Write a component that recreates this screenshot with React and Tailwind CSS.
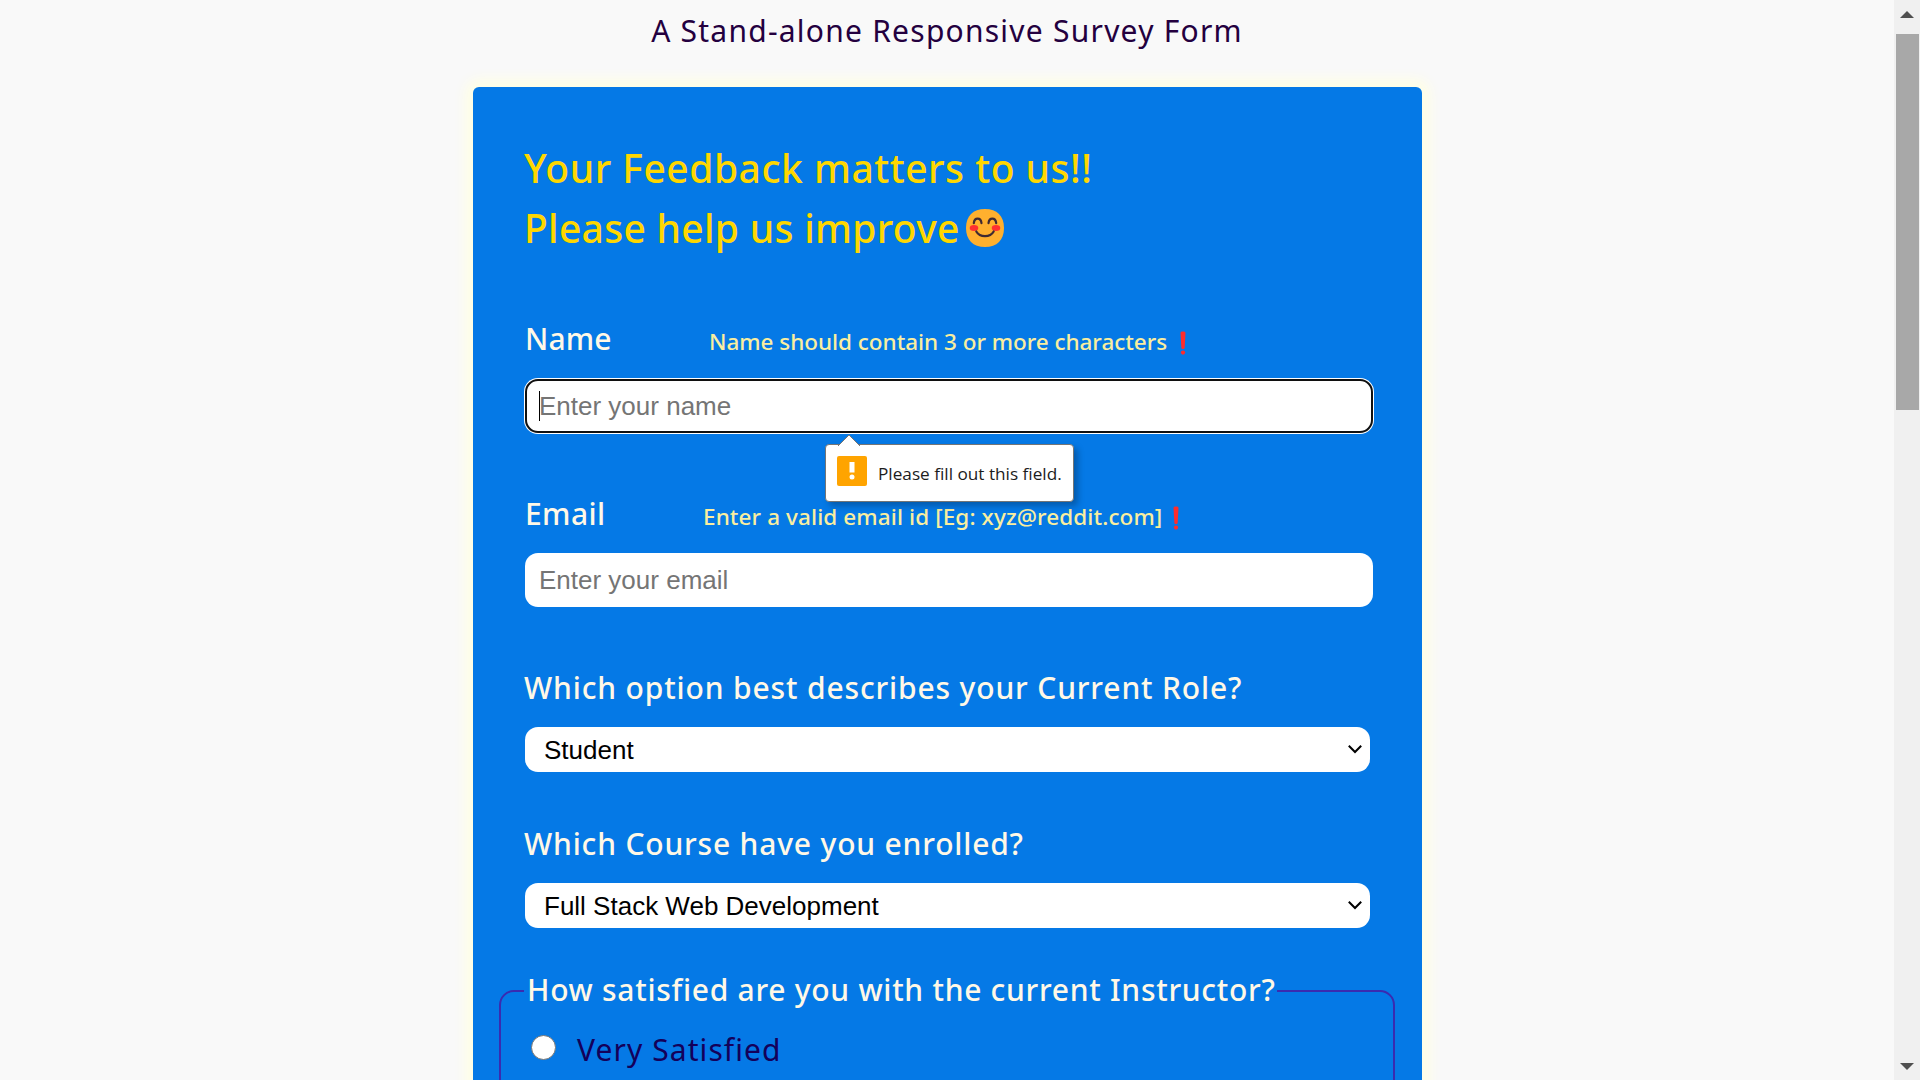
import React from 'react';

const labelClass = 'whitespace-nowrap font-medium text-[30px] leading-[40px] text-[#fff8e7]';
const hintClass = 'whitespace-nowrap font-medium text-[22.5px] leading-[40px] text-[#f9eea0]';
const inputClass =
  "block h-[54px] w-[848px] rounded-[13px] bg-white px-[14px] font-['Liberation_Sans',Arial,sans-serif] text-[26px] text-black outline-none placeholder:text-[#757575] placeholder:opacity-100";

function SmilingFace() {
  return (
    <svg className="ml-[5px] h-[40px] w-[40px]" viewBox="0 0 40 40" role="img" aria-label="smiling face">
      <path d="M20 1C32 1 39 8 39 20s-7 19-19 19S1 32 1 20 8 1 20 1Z" fill="#ffb02e" />
      <ellipse cx="9" cy="20" rx="4.3" ry="3" fill="#ff3030" />
      <ellipse cx="31" cy="20" rx="4.3" ry="3" fill="#ff3030" />
      <path d="M8.800 15.200c.7-6 7-6 7.700 0M23.500 15.200c.7-6 7-6 7.700 0" fill="none" stroke="#402a32" strokeWidth="2.200" strokeLinecap="round" />
      <path d="M11.300 23.500c3.500 6.200 13.900 6.200 17.400 0" fill="none" stroke="#402a32" strokeWidth="2.200" strokeLinecap="round" />
    </svg>
  );
}

function RedMark({ className }) {
  return (
    <svg className={className} viewBox="0 0 6 27" role="img" aria-label="exclamation">
      <path d="M.2 2.200C.2.200 5.800.200 5.800 2.200L4.900 18.500C4.800 20.800 1.200 20.800 1.100 18.500Z" fill="#ff2c2c" />
      <circle cx="3" cy="24.300" r="2.400" fill="#ff2c2c" />
    </svg>
  );
}

function SelectBox({ value }) {
  return (
    <div className="relative mt-[19px] w-[845px]">
      <select
        className="block h-[45px] w-full appearance-none rounded-[13px] bg-white pl-[19px] pt-px font-['Liberation_Sans',Arial,sans-serif] text-[26px] text-black outline-none"
        defaultValue={value}
      >
        <option>{value}</option>
      </select>
      <svg className="absolute right-[7px] top-[17px] h-[10px] w-[16px]" viewBox="0 0 16 10" fill="none" stroke="#000" strokeWidth="2">
        <path d="M1.800 1.800 8 8l6.200-6.200" />
      </svg>
    </div>
  );
}

function ValidationBubble() {
  return (
    <div className="absolute left-[300px] top-[65px] z-10 flex h-[58px] w-[249px] items-center rounded-[4px] border border-[#757575] bg-white pl-[11px] shadow-[4px_4px_6px_rgba(0,0,0,0.25)]">
      <svg className="absolute left-[12px] top-[-11px] h-[12px] w-[22px]" viewBox="0 0 22 12">
        <path d="M0 12 11 1l11 11" fill="#fff" stroke="#757575" />
        <path d="M1 11.300h20V12H1Z" fill="#fff" />
      </svg>
      <svg className="mb-[4px] h-[30px] w-[30px]" viewBox="0 0 30 30">
        <rect width="30" height="30" rx="2" fill="#ffa400" />
        <rect x="12.500" y="6" width="5" height="10.500" fill="#fff" />
        <circle cx="15" cy="21" r="2.500" fill="#fff" />
      </svg>
      <span className="ml-[11px] mt-[2px] whitespace-nowrap font-['Open_Sans','Noto_Sans',sans-serif] text-[17.200px] leading-6 text-[#1c1c1c]">
        Please fill out this field.
      </span>
    </div>
  );
}

function Scrollbar() {
  return (
    <div className="flex h-full w-[26px] flex-col items-center bg-[#f0f0f0]">
      <svg className="mt-[11px] h-[7px] w-[14px]" viewBox="0 0 14 7">
        <path d="M7 0 14 7H0Z" fill="#505050" />
      </svg>
      <div className="ml-px mt-4 h-[376px] w-[23px] bg-[#a8a8a8]" />
      <svg className="mb-[10px] mt-auto h-[7px] w-[14px]" viewBox="0 0 14 7">
        <path d="M7 7 0 0h14Z" fill="#505050" />
      </svg>
    </div>
  );
}

export default function App() {
  return (
    <div className="flex h-screen w-full overflow-hidden bg-[#f9f9f9] font-['Noto_Sans','Open_Sans',sans-serif]">
      <main className="h-full flex-1 overflow-hidden pt-[11px]">
        <p className="text-center text-[30px] leading-[40px] tracking-[1.240px] text-[#24003f]">
          A Stand-alone Responsive Survey Form
        </p>
        <form className="ml-[473px] mt-[36px] h-[1200px] w-[949px] rounded-[6px] bg-[#0579e6] pl-[52px] pt-[51px] shadow-[0_0_13px_7px_#ffffe4]">
          <h1 className="-ml-px whitespace-nowrap text-[39px] font-medium leading-[60px] tracking-[0.510px] text-[#ffd700]">
            Your Feedback matters to us!!
            <span className="flex h-[60px] items-center tracking-[0.300px]">
              Please help us improve
              <SmilingFace />
            </span>
          </h1>

          <div className="mt-[61px] flex items-start">
            <label className={`${labelClass} w-[184px] tracking-[0.100px]`}>Name</label>
            <span className={`${hintClass} mt-[3px] tracking-[-0.030px]`}>Name should contain 3 or more characters</span>
            <RedMark className="ml-[13px] mt-[12px] h-[24px] w-[6px]" />
          </div>
          <div className="relative mt-[17px]">
            <input className={`${inputClass} border-2 border-[#101010] px-[12px]! shadow-[0_0_0_1px_#fff]`} placeholder="Enter your name" />
            <div className="absolute left-[14px] top-[12px] h-[30px] w-px bg-black" />
            <ValidationBubble />
          </div>

          <div className="mt-[61px] flex items-start">
            <label className={`${labelClass} w-[178px] tracking-[0.400px]`}>Email</label>
            <span className={`${hintClass} mt-[3px] tracking-[0.100px]`}>Enter a valid email id [Eg: xyz@reddit.com]</span>
            <RedMark className="ml-[11px] mt-[12px] h-[24px] w-[6px]" />
          </div>
          <input className={`${inputClass} mt-[16px]`} placeholder="Enter your email" />

          <label className={`${labelClass} -ml-px mt-[61px] block tracking-[0.850px]`}>Which option best describes your Current Role?</label>
          <SelectBox value="Student" />

          <label className={`${labelClass} -ml-px mt-[52px] block tracking-[0.820px]`}>Which Course have you enrolled?</label>
          <SelectBox value="Full Stack Web Development" />

          <fieldset className="-ml-[26px] mt-[41px] h-[300px] w-[896px] rounded-[15px] border-2 border-[#3a2bb0] pl-[23px]">
            <legend className={`${labelClass} w-[753px] pb-[3px] pl-[3px] pt-px tracking-[0.720px]`}>
              How satisfied are you with the current Instructor?
            </legend>
            <div className="ml-[7px] mt-[17px] flex items-start">
              <input
                type="radio"
                name="instructor"
                className="mt-[5px] h-[25px] w-[25px] appearance-none rounded-full border border-[#757575] bg-white"
              />
              <span className="ml-[21px] text-[30px] leading-[40px] tracking-[1.080px] text-[#14005a]">Very Satisfied</span>
            </div>
          </fieldset>
        </form>
      </main>
      <Scrollbar />
    </div>
  );
}
